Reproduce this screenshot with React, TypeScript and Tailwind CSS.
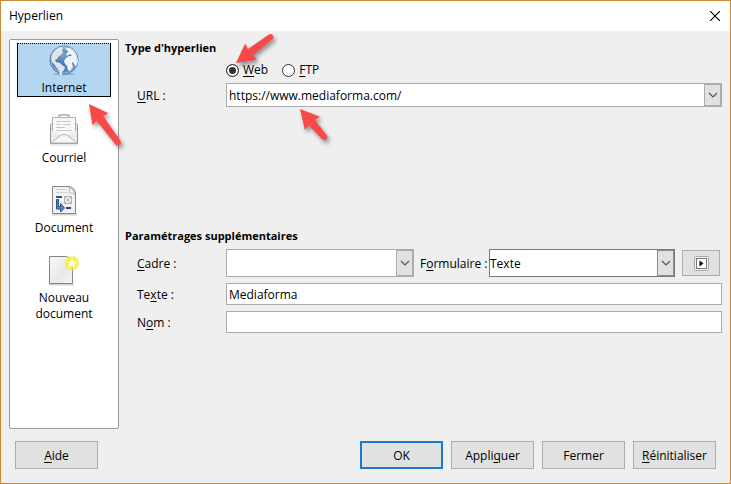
import { useState } from "react";
import type { ReactNode } from "react";

const pages: { id: string; label: string; icon: ReactNode }[] = [
  { id: "internet", label: "Internet", icon: <GlobeIcon /> },
  { id: "mail", label: "Courriel", icon: <MailIcon /> },
  { id: "document", label: "Document", icon: <DocumentIcon /> },
  { id: "new", label: "Nouveau document", icon: <NewDocumentIcon /> },
];

const callouts = [
  { x: 235, y: 62, angle: -37, length: 43 },
  { x: 88, y: 103, angle: 53, length: 48 },
  { x: 299, y: 108, angle: 49, length: 37 },
];

function GlobeIcon() {
  return (
    <svg width="32" height="32" viewBox="0 0 32 32" aria-hidden="true">
      <defs>
        <radialGradient id="sea" cx="0.45" cy="0.3" r="0.75">
          <stop offset="0" stopColor="#7ba3d0" />
          <stop offset="0.5" stopColor="#4476b2" />
          <stop offset="1" stopColor="#5f93cf" />
        </radialGradient>
      </defs>
      <ellipse cx="16" cy="30" rx="11" ry="1.5" fill="#6f8dac" opacity="0.5" />
      <circle cx="16" cy="16" r="14" fill="url(#sea)" stroke="#56789f" />
      <path d="M4 10q4-6 9-7l2 1-1 2 1 2-2 3-2 1-2 3-2 1 1 2 4 1 2 2 3 2-1 3-2 2v4l-2-1-1-4-3-4-2-3-2-2-1-4z" fill="#dfe5ea" />
      <path d="M17 5q3-2 5-1 5 2 7 8l1 5-1 4-2 1-2-4-1 1 1 4-3 4-2-1-1-4-2-2-1-3 2-3 3-2h3l-2-2-3 2-1-2 2-2-1-2z" fill="#f0f2f4" />
      <path d="M5 8a13 13 0 0 1 22 0q-11-5-22 0z" fill="#fff" opacity="0.25" />
      <circle cx="16" cy="16" r="13" fill="none" stroke="#c3d8ee" opacity="0.6" />
    </svg>
  );
}

function MailIcon() {
  return (
    <svg width="32" height="32" viewBox="0 0 32 32" aria-hidden="true">
      <path d="M2 31h28" stroke="#bbb" opacity="0.6" />
      <path d="M11 3.500V2q0-1 1-1h8q1 0 1 1v1.500" fill="none" stroke="#aaa" strokeWidth="1.5" />
      <path d="M2.500 10.500L6 7h20l3.500 3.500v19h-27z" fill="#e6e6e4" stroke="#949491" />
      <path d="M4.500 3.500h23v16l-5 2h-13l-5-2z" fill="#f7f7f6" stroke="#b0b0ae" />
      <path d="M8 7.500h15M8 10.500h5M15 10.500h8M8 13.500h9M8 16.500h16" stroke="#c8c8c6" />
      <path d="M3 16l9 5h8l9-5v13H3z" fill="#ededeb" opacity="0.9" />
      <path d="M3 29l10-8q3-1 6 0l10 8z" fill="#f6f6f5" stroke="#b8b8b6" />
    </svg>
  );
}

function DocumentIcon() {
  return (
    <svg width="32" height="32" viewBox="0 0 32 32" aria-hidden="true">
      <path d="M4 30.500h25" stroke="#aaa" strokeWidth="2" opacity="0.5" />
      <path d="M4.500 2.500h17q6 2 6 7v20h-23z" fill="#f2f2f0" stroke="#858582" />
      <path d="M21 3q2 3 0 6 4-1 6 2-1-6-6-8z" fill="#fff" stroke="#b4b4b2" />
      <path d="M8 5.500h11M8 8.500h11" stroke="#d0d0ce" />
      <path d="M8 13h6" stroke="#31569b" strokeWidth="2" />
      <path d="M16.500 12.500h7v7h-7zM17 13l6 6M23 13l-6 6" fill="#f4f4f2" stroke="#b0b0ad" />
      <path d="M18 24h5" stroke="#29477f" strokeWidth="2" />
      <path d="M8.500 15.500h2v7h2v-3l4 4.500-4 4v-3h-4z" fill="#5783c0" stroke="#2b4f91" />
    </svg>
  );
}

function NewDocumentIcon() {
  return (
    <svg width="32" height="32" viewBox="0 0 32 32" aria-hidden="true">
      <defs>
        <linearGradient id="paper" x1="0" y1="0" x2="1" y2="1">
          <stop offset="0" stopColor="#fafafa" />
          <stop offset="0.6" stopColor="#e8e8e6" />
          <stop offset="1" stopColor="#f6f6f5" />
        </linearGradient>
        <radialGradient id="glow">
          <stop offset="0.4" stopColor="#f5ec3c" />
          <stop offset="0.8" stopColor="#f5ec3c" stopOpacity="0.75" />
          <stop offset="1" stopColor="#f5ec3c" stopOpacity="0" />
        </radialGradient>
      </defs>
      <path d="M1 30.500h25" stroke="#aaa" strokeWidth="2" opacity="0.5" />
      <path d="M1.500 2.500h17q6 2 6 7v20h-23z" fill="url(#paper)" stroke="#858582" />
      <circle cx="24" cy="9" r="8" fill="url(#glow)" />
      <path d="M24 4l1.500 3.500H29l-2.500 2.500 1 3.500-3.500-2-3.500 2 1-3.500L19 7.500h3.500z" fill="#fffff0" />
    </svg>
  );
}

function Chevron() {
  return (
    <svg width="10" height="6" viewBox="0 0 10 6" fill="none" stroke="#555" strokeWidth="1.2" aria-hidden="true">
      <path d="M1 1l4 4 4-4" />
    </svg>
  );
}

function Callouts() {
  return (
    <svg className="pointer-events-none absolute left-0 top-0 drop-shadow-[2px_3px_2px_rgba(0,0,0,0.4)]" width="340" height="160" aria-hidden="true">
      {callouts.map((c) => (
        <path
          key={c.x}
          transform={`translate(${c.x} ${c.y}) rotate(${c.angle})`}
          d={`M0 0L19-10 18-4 ${c.length}-3q3 0 3 3t-3 3L18 4 19 10z`}
          fill="#f94848"
        />
      ))}
    </svg>
  );
}

// Underlines the keyboard mnemonic of a label
function Mnemonic({ text, at }: { text: string; at: number }) {
  return (
    <span>
      {text.slice(0, at)}
      <span className="underline underline-offset-2">{text[at]}</span>
      {text.slice(at + 1)}
    </span>
  );
}

function ComboBox({ id, value, className }: { id: string; value: string; className: string }) {
  return (
    <div className={`flex min-w-0 border border-[#ababab] bg-white ${className}`}>
      <input id={id} defaultValue={value} className="min-w-0 flex-1 px-[2px] pt-px outline-none" />
      <button
        type="button"
        aria-label="Ouvrir la liste"
        className="flex w-[17px] items-center justify-center border border-[#ababab] bg-[#e1e1e1]"
      >
        <Chevron />
      </button>
    </div>
  );
}

function DialogButton({ children, primary = false }: { children: ReactNode; primary?: boolean }) {
  return (
    <button
      type="button"
      className={`h-7 w-[83px] whitespace-nowrap bg-[#e1e1e1] pt-px ${
        primary ? "border-2 border-[#1979ca]" : "border border-[#adadad]"
      }`}
    >
      {children}
    </button>
  );
}

export default function App() {
  const [active, setActive] = useState("internet");
  const [kind, setKind] = useState("web");

  return (
    <div className="relative flex min-h-screen flex-col border border-[#cb8a38] bg-[#efefef] font-['Open_Sans','Noto_Sans',sans-serif] text-xs text-black">
      {/* TITLE BAR */}
      <header className="flex h-[30px] items-center justify-between bg-white pl-2 pr-[10px]">
        <h1>Hyperlien</h1>
        <button type="button" aria-label="Fermer la fenêtre">
          <svg width="10" height="10" viewBox="0 0 10 10" stroke="#000" strokeWidth="1.2">
            <path d="M0 0l10 10M10 0L0 10" />
          </svg>
        </button>
      </header>

      <div className="flex flex-1 gap-[6px] px-2 pt-2">
        {/* SIDEBAR */}
        <nav className="flex w-[110px] shrink-0 flex-col gap-4 rounded-xs border border-[#979b9b] bg-white px-[7px] pt-[3px]">
          {pages.map((page) => (
            <button
              key={page.id}
              type="button"
              onClick={() => setActive(page.id)}
              className={`flex min-h-[54px] flex-col items-center border px-2 leading-4 ${
                active === page.id
                  ? "border-black bg-[#b3d7f3] [border-top-style:dotted]"
                  : "border-transparent"
              }`}
            >
              <span className="mb-1">{page.icon}</span>
              {page.label}
            </button>
          ))}
        </nav>

        {/* SETTINGS */}
        <main className="min-w-0 flex-1">
          <h2 className="text-[11px] leading-[18px] font-bold">Type d'hyperlien</h2>
          <div className="mt-1 flex h-[18px] items-center gap-[14px] pl-[101px]">
            {["Web", "FTP"].map((name) => (
              <label key={name} className="flex items-center gap-1">
                <input
                  type="radio"
                  name="kind"
                  checked={kind === name.toLowerCase()}
                  onChange={() => setKind(name.toLowerCase())}
                  className="size-[13px] appearance-none rounded-full border border-[#333] bg-white checked:bg-[#333] checked:shadow-[inset_0_0_0_2px_white]"
                />
                <Mnemonic text={name} at={0} />
              </label>
            ))}
          </div>
          <div className="mt-1 flex items-center">
            <label htmlFor="url" className="w-[101px] pl-3 pt-px">
              <Mnemonic text="URL :" at={0} />
            </label>
            <ComboBox id="url" value="https://www.mediaforma.com/" className="h-6 flex-1" />
          </div>

          <h2 className="mt-[120px] text-[11px] leading-[18px] font-bold">Paramétrages supplémentaires</h2>
          <div className="mt-1 flex items-center">
            <label htmlFor="frame" className="w-[101px] pl-3 pt-px">
              <Mnemonic text="Cadre :" at={0} />
            </label>
            <ComboBox id="frame" value="" className="h-7 flex-1" />
            <label htmlFor="form" className="w-[75px] whitespace-nowrap pl-[6px] pt-px">
              <Mnemonic text="Formulaire :" at={1} />
            </label>
            <div className="relative min-w-0 flex-1">
              <select id="form" className="block h-7 w-full appearance-none border border-[#7a7a7a] bg-white pt-px">
                <option>Texte</option>
                <option>Bouton</option>
              </select>
              <span className="pointer-events-none absolute inset-y-px right-px flex w-[17px] items-center justify-center border border-[#8c8c8c] bg-[#e1e1e1]">
                <Chevron />
              </span>
            </div>
            <button
              type="button"
              aria-label="Événements"
              className="ml-[7px] mr-[2px] flex h-[26px] w-[38px] items-center justify-center border border-[#adadad] bg-[#e1e1e1]"
            >
              <svg width="15" height="15" viewBox="0 0 15 15" fill="none">
                <rect x="0.500" y="0.500" width="14" height="14" rx="1" fill="#f2f2f2" stroke="#aaa" />
                <rect x="2.500" y="2.500" width="10" height="10" fill="#fff" stroke="#777" />
                <path d="M5.500 4.500L9.500 7.500l-4 3z" fill="#000" />
              </svg>
            </button>
          </div>
          <div className="mt-[6px] flex items-center">
            <label htmlFor="text" className="w-[101px] pl-3 pt-px">
              <Mnemonic text="Texte :" at={2} />
            </label>
            <input id="text" defaultValue="Mediaforma" className="h-[22px] min-w-0 flex-1 border border-[#ababab] bg-white px-[2px] pt-px" />
          </div>
          <div className="mt-[6px] flex items-center">
            <label htmlFor="name" className="w-[101px] pl-3 pt-px">
              <Mnemonic text="Nom :" at={1} />
            </label>
            <input id="name" className="h-[22px] min-w-0 flex-1 border border-[#ababab] bg-white px-[2px] pt-px" />
          </div>
        </main>
      </div>

      {/* FOOTER */}
      <footer className="flex gap-2 px-[14px] pb-[14px] pt-3">
        <DialogButton>
          <Mnemonic text="Aide" at={0} />
        </DialogButton>
        <div className="flex-1" />
        <DialogButton primary>OK</DialogButton>
        <DialogButton>
          <Mnemonic text="Appliquer" at={5} />
        </DialogButton>
        <DialogButton>Fermer</DialogButton>
        <DialogButton>
          <Mnemonic text="Réinitialiser" at={0} />
        </DialogButton>
      </footer>

      <Callouts />
    </div>
  );
}
